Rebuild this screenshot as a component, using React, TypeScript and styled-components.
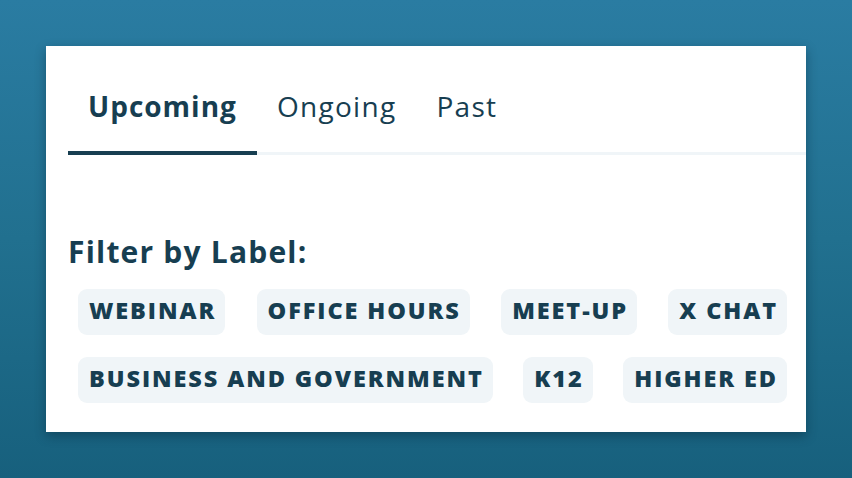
import React, { useState } from 'react';
import styled, { createGlobalStyle } from 'styled-components';

const GlobalStyle = createGlobalStyle`
  html, body {
    margin: 0;
    padding: 0;
  }
  body {
    width: 852px;
    height: 478px;
    overflow: hidden;
    background: linear-gradient(180deg, #2a7ca2 0%, #21708f 50%, #17607d 100%);
    font-family: "Open Sans", "Noto Sans", sans-serif;
    color: #173e51;
  }
`;

const Page = styled.div`
  padding: 46px;
`;

const Card = styled.div`
  width: 760px;
  height: 386px;
  box-sizing: border-box;
  background: #ffffff;
  box-shadow: 0 4px 10px rgba(8, 40, 58, 0.45);
  padding: 0 0 0 22px;
`;

const TabBar = styled.div`
  display: flex;
  padding-top: 42px;
  border-bottom: 3px solid #f0f5f8;
`;

const Tab = styled.button<{ $active: boolean }>`
  background: none;
  border: none;
  margin: 0 0 -3px 0;
  padding: 0 20px 27px;
  font-family: "Open Sans", "Noto Sans", sans-serif;
  font-size: 28px;
  line-height: 36px;
  letter-spacing: ${p => (p.$active ? '1px' : '1.3px')};
  font-weight: ${p => (p.$active ? 700 : 400)};
  color: #173e51;
  border-bottom: 4px solid ${p => (p.$active ? '#173e51' : 'transparent')};
  cursor: pointer;
`;

const FilterSection = styled.div`
  padding: 80px 19px 0 0;
`;

const FilterTitle = styled.h3`
  margin: 0 0 20px;
  font-size: 30px;
  line-height: 34px;
  letter-spacing: 1.2px;
  font-weight: 700;
  color: #173e51;
`;

const ChipList = styled.div`
  display: flex;
  flex-wrap: wrap;
  justify-content: space-between;
  row-gap: 22px;
  column-gap: 28px;
  padding-left: 10px;
`;

const Chip = styled.button<{ $selected?: boolean }>`
  height: 46px;
  padding: 0 9px 4px 11px;
  border: none;
  border-radius: 9px;
  background: ${p => (p.$selected ? '#dce9f0' : '#f0f5f8')};
  font-family: "Open Sans", "Noto Sans", sans-serif;
  font-size: 23.5px;
  letter-spacing: 1.9px;
  font-weight: 800;
  color: #173e51;
  cursor: pointer;
`;

const ChipRow = styled.div`
  display: contents;
`;

const tabs = ['Upcoming', 'Ongoing', 'Past'];

const labelRows = [
  ['WEBINAR', 'OFFICE HOURS', 'MEET-UP', 'X CHAT'],
  ['BUSINESS AND GOVERNMENT', 'K12', 'HIGHER ED'],
];

const App: React.FC = () => {
  const [activeTab, setActiveTab] = useState('Upcoming');
  const [selected, setSelected] = useState<string | null>(null);

  return (
    <>
      <GlobalStyle />
      <Page>
        <Card>
          <TabBar>
            {tabs.map(t => (
              <Tab key={t} $active={activeTab === t} onClick={() => setActiveTab(t)}>
                {t}
              </Tab>
            ))}
          </TabBar>

          <FilterSection>
            <FilterTitle>Filter by Label:</FilterTitle>
            <ChipList>
              {labelRows.map((row, i) => (
                <ChipRow key={i}>
                  {row.map(label => (
                    <Chip
                      key={label}
                      $selected={selected === label}
                      onClick={() => setSelected(selected === label ? null : label)}
                    >
                      {label}
                    </Chip>
                  ))}
                </ChipRow>
              ))}
            </ChipList>
          </FilterSection>
        </Card>
      </Page>
    </>
  );
};

export default App;
